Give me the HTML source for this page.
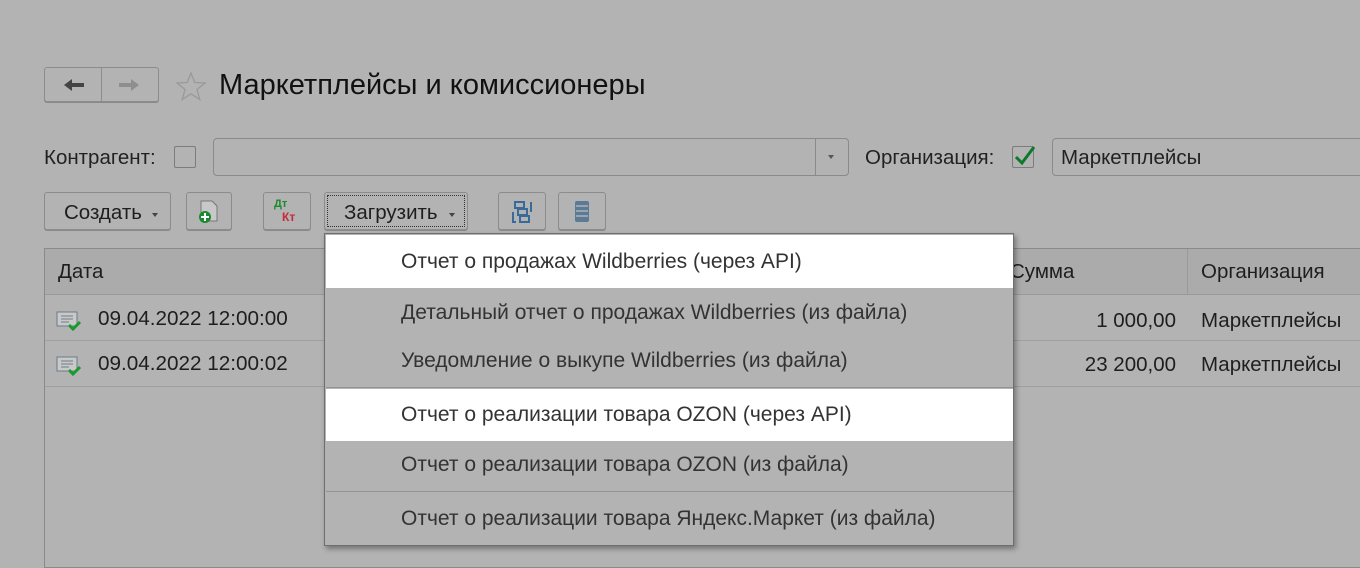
<!DOCTYPE html>
<html><head><meta charset="utf-8"><style>
*{box-sizing:border-box;margin:0;padding:0}
body{width:1360px;height:557px;background:#b3b3b3;font-family:"Liberation Sans",sans-serif;color:#1e1e1e;position:relative;overflow:hidden}
.a{position:absolute}
.btn{position:absolute;border:1px solid #8c8c8c;border-radius:3px;background:#b3b3b3;box-shadow:0 1px 0 #8a8a8a}
.t{position:absolute;font-size:20.5px;white-space:nowrap}
.mi{position:absolute;left:1px;width:687px;font-size:21px;padding-left:75px;color:#333;white-space:nowrap}
</style></head><body>
<div class="btn" style="left:44px;top:67px;width:115px;height:35px"></div>
<div class="a" style="left:101px;top:67px;width:1px;height:35px;background:#8c8c8c"></div>
<svg class="a" style="left:62px;top:76px" width="24" height="18"><path d="M2 9 L10 3 L10 7 L22 7 L22 11 L10 11 L10 15 Z" fill="#444"/></svg>
<svg class="a" style="left:117px;top:76px" width="24" height="18"><path d="M22 9 L14 3 L14 7 L2 7 L2 11 L14 11 L14 15 Z" fill="#8e8e8e"/></svg>
<svg class="a" style="left:175px;top:71px" width="32" height="30"><path d="M16 2 L19.8 11.5 L30 12 L22 18.5 L24.8 28.5 L16 22.8 L7.2 28.5 L10 18.5 L2 12 L12.2 11.5 Z" fill="none" stroke="#9a9a9a" stroke-width="1.3"/></svg>
<div class="t" style="left:219px;top:69px;font-size:29px;color:#111">Маркетплейсы и комиссионеры</div>

<div class="t" style="left:44px;top:146px;color:#222">Контрагент:</div>
<div class="a" style="left:174px;top:146px;width:22px;height:22px;border:1px solid #7c7c7c;border-radius:2px"></div>
<div class="a" style="left:213px;top:138px;width:636px;height:38px;border:1px solid #8a8a8a;border-radius:4px"></div>
<div class="a" style="left:815px;top:139px;width:1px;height:36px;background:#8a8a8a"></div>
<div class="a" style="left:828px;top:155px;border-left:3px solid transparent;border-right:3px solid transparent;border-top:4px solid #555"></div>
<div class="t" style="left:865px;top:146px;color:#222">Организация:</div>
<div class="a" style="left:1012px;top:146px;width:22px;height:22px;border:1px solid #7c7c7c;border-radius:2px"></div>
<svg class="a" style="left:1012px;top:142px" width="26" height="26"><path d="M4 15 L10 21 L22 5" fill="none" stroke="#0d7a2a" stroke-width="3"/></svg>
<div class="a" style="left:1052px;top:138px;width:320px;height:38px;border:1px solid #8a8a8a;border-radius:4px"></div>
<div class="t" style="left:1061px;top:146px;color:#222">Маркетплейсы</div>

<div class="btn" style="left:44px;top:192px;width:127px;height:38px"></div>
<div class="t" style="left:64px;top:201px">Создать</div>
<div class="a" style="left:152px;top:213px;border-left:3px solid transparent;border-right:3px solid transparent;border-top:4px solid #444"></div>
<div class="btn" style="left:186px;top:192px;width:46px;height:38px"></div>
<svg class="a" style="left:196px;top:199px" width="26" height="26"><path d="M5 2 L16 2 L21 7 L21 22 L5 22 Z" fill="#c8c8c8" stroke="#777"/><circle cx="9" cy="18" r="6" fill="#1a8a2e"/><path d="M9 14 V22 M5 18 H13" stroke="#fff" stroke-width="2"/></svg>
<div class="btn" style="left:263px;top:192px;width:48px;height:38px"></div>
<div class="a" style="left:274px;top:198px;font-size:11px;font-weight:bold;color:#1a8a2e">Дт</div>
<div class="a" style="left:282px;top:210px;font-size:12px;font-weight:bold;color:#c8293a">Кт</div>
<div class="btn" style="left:324px;top:192px;width:144px;height:38px;outline:1px dotted #333;outline-offset:-4px"></div>
<div class="t" style="left:344px;top:201px">Загрузить</div>
<div class="a" style="left:449px;top:213px;border-left:3px solid transparent;border-right:3px solid transparent;border-top:4px solid #444"></div>
<div class="btn" style="left:498px;top:192px;width:48px;height:38px"></div>
<svg class="a" style="left:509px;top:199px" width="26" height="26"><g fill="none" stroke="#3a6a9a" stroke-width="2"><rect x="6" y="3" width="9" height="6"/><rect x="9" y="10" width="9" height="6"/><rect x="11" y="17" width="9" height="6"/><path d="M4 13 V23 H7 M22 3 H22 V13"/></g></svg>
<div class="btn" style="left:558px;top:192px;width:48px;height:38px"></div>
<svg class="a" style="left:572px;top:199px" width="20" height="26"><rect x="3" y="2" width="14" height="21" rx="2" fill="#5a7a95"/><path d="M4 7 H16 M4 12 H16 M4 17 H16" stroke="#b3b3b3" stroke-width="1.5"/></svg>

<div class="a" style="left:44px;top:248px;width:1330px;height:320px;border:1px solid #8a8a8a"></div>
<div class="a" style="left:45px;top:249px;width:1320px;height:46px;background:#ababab;border-bottom:1px solid #9a9a9a"></div>
<div class="a" style="left:1187px;top:249px;width:1px;height:46px;background:#9a9a9a"></div>
<div class="t" style="left:58px;top:260px">Дата</div>
<div class="t" style="left:1010px;top:260px">Сумма</div>
<div class="t" style="left:1201px;top:260px">Организация</div>
<div class="a" style="left:45px;top:340px;width:1320px;height:1px;background:#9f9f9f"></div>
<div class="a" style="left:45px;top:386px;width:1320px;height:1px;background:#9f9f9f"></div>
<svg class="a" style="left:55px;top:309px" width="30" height="22"><rect x="2" y="3" width="20" height="14" fill="#c9c9c9" stroke="#6a7a8a"/><path d="M6 7 H18 M6 10 H18 M6 13 H14" stroke="#6a7a8a"/><path d="M14 16 L18 20 L25 13" fill="none" stroke="#1a9a2e" stroke-width="3"/></svg>
<svg class="a" style="left:55px;top:354px" width="30" height="22"><rect x="2" y="3" width="20" height="14" fill="#c9c9c9" stroke="#6a7a8a"/><path d="M6 7 H18 M6 10 H18 M6 13 H14" stroke="#6a7a8a"/><path d="M14 16 L18 20 L25 13" fill="none" stroke="#1a9a2e" stroke-width="3"/></svg>
<div class="t" style="left:98px;top:307px;font-size:20.7px">09.04.2022 12:00:00</div>
<div class="t" style="left:98px;top:352px;font-size:20.7px">09.04.2022 12:00:02</div>
<div class="t" style="right:184px;top:309px">1 000,00</div>
<div class="t" style="right:184px;top:353px">23 200,00</div>
<div class="t" style="left:1201px;top:309px">Маркетплейсы</div>
<div class="t" style="left:1201px;top:353px">Маркетплейсы</div>

<div class="a" style="left:324px;top:233px;width:690px;height:313px;background:#b3b3b3;border:1px solid #6e6e6e;box-shadow:2px 3px 5px rgba(0,0,0,.35)">
<div class="mi" style="top:1px;height:53px;line-height:53px;background:#fff">Отчет о продажах Wildberries (через API)</div>
<div class="mi" style="top:54px;height:49px;line-height:49px">Детальный отчет о продажах Wildberries (из файла)</div>
<div class="mi" style="top:103px;height:50px;line-height:48px">Уведомление о выкупе Wildberries (из файла)</div>
<div class="a" style="left:1px;top:153px;width:687px;height:1px;background:#939393"></div>
<div class="mi" style="top:155px;height:52px;line-height:52px;background:#fff">Отчет о реализации товара OZON (через API)</div>
<div class="mi" style="top:207px;height:50px;line-height:48px">Отчет о реализации товара OZON (из файла)</div>
<div class="a" style="left:1px;top:257px;width:687px;height:1px;background:#939393"></div>
<div class="mi" style="top:258px;height:53px;line-height:53px">Отчет о реализации товара Яндекс.Маркет (из файла)</div>
</div>
</body></html>
